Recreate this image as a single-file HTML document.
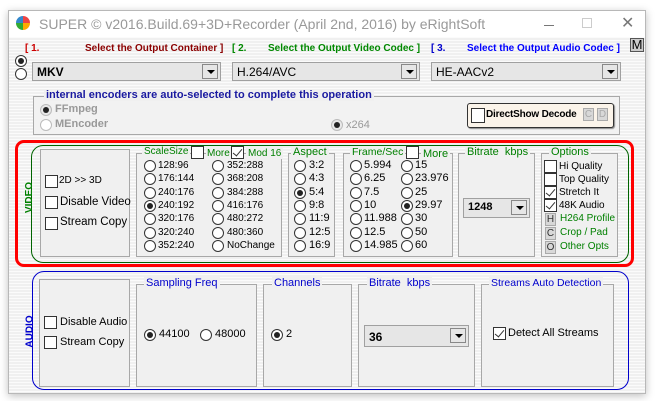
<!DOCTYPE html>
<html><head><meta charset="utf-8">
<style>
*{box-sizing:border-box;margin:0;padding:0}
body{width:656px;height:401px;background:#fff;position:relative;overflow:hidden;font-family:"Liberation Sans",sans-serif;font-size:11px;color:#000}
.a{position:absolute;white-space:nowrap}
#win{position:absolute;left:8px;top:10px;width:638px;height:384px;border:1px solid #b8b8b8;box-shadow:0 2px 8px rgba(0,0,0,.25);background:repeating-linear-gradient(#f0f0f0 0 2px,#fbfbfb 2px 3px)}
#tb{position:absolute;left:0;top:0;width:100%;height:26px;background:#fff}
.gb{position:absolute;border:1px solid #a8a8a8;background:#f0f0f0}
.lg{position:absolute;top:-8px;background:#f0f0f0;padding:0 2px;font-size:11px;white-space:nowrap}
.r{position:absolute;width:12px;height:12px;border:1px solid #333;border-radius:50%;background:#fff}
.r.on::after{content:"";position:absolute;left:2px;top:2px;width:6px;height:6px;border-radius:50%;background:#222}
.c{position:absolute;width:13px;height:13px;border:1px solid #333;background:#fff}
.c.on::after{content:"";position:absolute;left:3px;top:0px;width:4px;height:8px;border:solid #333;border-width:0 1.5px 1.5px 0;transform:rotate(40deg)}
.dd{position:absolute;height:19px;border:1px solid #a0a0a0;background:#e6e6e6;font-size:12px;padding:2px 4px;white-space:nowrap}
.dd i{position:absolute;right:2px;top:1px;width:16px;height:15px;border:1px solid #888;background:#e6e6e6}
.dd i::after{content:"";position:absolute;left:4px;top:5px;border:4px solid transparent;border-top:4px solid #000}
.t{position:absolute;white-space:nowrap;font-size:11px}
.g{color:#008000}
.sb{position:absolute;width:11px;height:13px;background:#d8d8d8;border:1px solid #aaa;font-size:10px;text-align:center;line-height:11px;color:#333}
</style></head><body>
<div id="win">
<div id="tb">
<div class="a" style="left:7px;top:5px;width:14px;height:14px;border-radius:50%;background:conic-gradient(#e44 0 25%,#fa0 0 50%,#3a3 0 75%,#38c 0)"></div>
<div class="a" style="left:30px;top:5px;font-size:14px;color:#999">SUPER © v2016.Build.69+3D+Recorder (April 2nd, 2016) by eRightSoft</div>
<div class="a" style="left:535px;top:14px;width:10px;height:1px;background:#777"></div>
<div class="a" style="left:573px;top:7px;width:10px;height:10px;border:1px solid #ccc"></div>
<div class="a" style="left:612px;top:2px;font-size:16px;color:#777">✕</div>
</div>
</div>
<div class="t" style="left:25px;top:43px;color:#c00;font-weight:bold;font-size:10px">[ 1.</div>
<div class="t" style="left:85px;top:43px;color:#8b0000;font-weight:bold;font-size:10px">Select the Output Container ]</div>
<div class="t" style="left:232px;top:43px;color:#080;font-weight:bold;font-size:10px">[ 2.</div>
<div class="t" style="left:268px;top:43px;color:#080;font-weight:bold;font-size:10px">Select the Output Video Codec ]</div>
<div class="t" style="left:431px;top:43px;color:#00c;font-weight:bold;font-size:10px">[ 3.</div>
<div class="t" style="left:467px;top:43px;color:#00f;font-weight:bold;font-size:10px">Select the Output Audio Codec ]</div>
<div class="a" style="left:630px;top:38px;width:14px;height:14px;border:1px solid #555;background:#ccc;font-size:13px;line-height:12px;text-align:center">M</div>
<div class="r on" style="left:15px;top:55px"></div>
<div class="r" style="left:15px;top:68px"></div>
<div class="dd" style="left:32px;top:62px;width:189px;font-weight:bold">MKV<i></i></div>
<div class="dd" style="left:232px;top:62px;width:188px">H.264/AVC<i></i></div>
<div class="dd" style="left:431px;top:62px;width:190px">HE-AACv2<i></i></div>
<div class="gb" style="left:33px;top:96px;width:587px;height:39px;background:#f2f2f2">
<div class="lg" style="left:10px;color:#1a1aa0;font-weight:bold;font-size:11px;top:-8px">internal encoders are auto-selected to complete this operation</div>
</div>
<div class="r on" style="left:40px;top:104px;border-color:#bbb;background:#e8e8e8"></div><div class="t" style="left:55px;top:103px;color:#999;font-weight:bold">FFmpeg</div>
<div class="r" style="left:40px;top:119px;border-color:#bbb"></div><div class="t" style="left:55px;top:118px;color:#999;font-weight:bold">MEncoder</div>
<div class="r on" style="left:331px;top:119px;border-color:#bbb;background:#e8e8e8"></div><div class="t" style="left:346px;top:119px;color:#999">x264</div>
<div class="a" style="left:467px;top:103px;width:147px;height:25px;border:1px solid #333;border-radius:3px;background:#fbf4ea;box-shadow:1px 1px 1px #888"></div>
<div class="c" style="left:471px;top:108px;width:14px;height:15px"></div>
<div class="t" style="left:486px;top:109px;font-weight:bold;font-size:10px;letter-spacing:-0.2px">DirectShow Decode</div>
<div class="sb" style="left:583px;top:108px;color:#aaa">C</div><div class="sb" style="left:597px;top:108px;color:#aaa">D</div>
<div class="a" style="left:15px;top:140px;width:619px;height:127px;border:3px solid #f00;border-radius:9px"></div>
<div class="a" style="left:31px;top:145px;width:598px;height:118px;border:1px solid #006400;border-radius:12px"></div>
<div class="a" style="left:14px;top:192px;transform:rotate(-90deg);color:#008000;font-weight:bold;font-size:10px">VIDEO</div>
<div class="gb" style="left:40px;top:149px;width:90px;height:108px"></div>
<div class="c" style="left:45px;top:175px"></div><div class="t" style="left:59px;top:175px;font-size:10px">2D &gt;&gt; 3D</div>
<div class="c" style="left:45px;top:196px"></div><div class="t" style="left:60px;top:196px;font-size:11.5px">Disable Video</div>
<div class="c" style="left:45px;top:217px"></div><div class="t" style="left:60px;top:216px;font-size:11.5px">Stream Copy</div>
<div class="gb" style="left:136px;top:153px;width:146px;height:104px">
<div class="lg g" style="left:5px;font-size:10px">ScaleSize</div></div>
<div class="c" style="left:191px;top:146px;width:13px;height:13px"></div>
<div class="t g" style="left:206px;top:148px;font-size:10px;background:#f0f0f0;padding:0 1px">More</div>
<div class="c on" style="left:231px;top:146px"></div>
<div class="t g" style="left:246px;top:148px;font-size:10px;background:#f0f0f0;padding:0 2px">Mod 16</div>
<div class="gb" style="left:288px;top:153px;width:47px;height:104px"><div class="lg g" style="left:2px;font-size:11px">Aspect</div></div>
<div class="gb" style="left:343px;top:153px;width:110px;height:104px"><div class="lg g" style="left:6px;font-size:10.5px">Frame/Sec</div></div>
<div class="c" style="left:406px;top:146px"></div><div class="t g" style="left:421px;top:148px;font-size:11px;background:#f0f0f0;padding:0 2px">More</div>
<div class="gb" style="left:458px;top:153px;width:77px;height:104px"><div class="lg g" style="left:6px;font-size:11px">Bitrate&nbsp; kbps</div></div>
<div class="dd" style="left:463px;top:198px;width:67px;font-weight:bold;font-size:11px;height:20px">1248<i></i></div>
<div class="gb" style="left:541px;top:153px;width:77px;height:104px"><div class="lg g" style="left:7px;font-size:11px">Options</div></div>
<div id="rad"></div>
<div class="c" style="left:544px;top:160px"></div><div class="t" style="left:559px;top:161px;font-size:10px">Hi Quality</div>
<div class="c" style="left:544px;top:173px"></div><div class="t" style="left:559px;top:174px;font-size:10px">Top Quality</div>
<div class="c on" style="left:544px;top:186px"></div><div class="t" style="left:559px;top:187px;font-size:10px">Stretch It</div>
<div class="c on" style="left:544px;top:199px"></div><div class="t" style="left:559px;top:200px;font-size:10px">48K Audio</div>
<div class="sb" style="left:545px;top:213px">H</div><div class="t g" style="left:560px;top:213px;font-size:10px">H264 Profile</div>
<div class="sb" style="left:545px;top:227px">C</div><div class="t g" style="left:560px;top:227px;font-size:10px">Crop / Pad</div>
<div class="sb" style="left:545px;top:241px">O</div><div class="t g" style="left:560px;top:241px;font-size:10px">Other Opts</div>
<div class="a" style="left:32px;top:271px;width:597px;height:119px;border:1px solid #00c;border-radius:12px"></div>
<div class="a" style="left:14px;top:326px;transform:rotate(-90deg);color:#00c;font-weight:bold;font-size:10px">AUDIO</div>
<div class="gb" style="left:39px;top:279px;width:91px;height:108px"></div>
<div class="c" style="left:44px;top:316px"></div><div class="t" style="left:60px;top:316px;font-size:11px">Disable Audio</div>
<div class="c" style="left:44px;top:336px"></div><div class="t" style="left:60px;top:336px;font-size:11px">Stream Copy</div>
<div class="gb" style="left:136px;top:284px;width:121px;height:103px"><div class="lg" style="left:7px;color:#00c">Sampling Freq</div></div>
<div class="r on" style="left:144px;top:329px"></div><div class="t" style="left:159px;top:328px;font-size:11px">44100</div>
<div class="r" style="left:200px;top:329px"></div><div class="t" style="left:215px;top:328px;font-size:11px">48000</div>
<div class="gb" style="left:263px;top:284px;width:89px;height:103px"><div class="lg" style="left:8px;color:#00c">Channels</div></div>
<div class="r on" style="left:271px;top:329px"></div><div class="t" style="left:286px;top:328px;font-size:11px">2</div>
<div class="gb" style="left:358px;top:284px;width:117px;height:103px"><div class="lg" style="left:8px;color:#00c">Bitrate&nbsp; kbps</div></div>
<div class="dd" style="left:364px;top:325px;width:105px;height:22px;font-weight:bold;padding-top:4px">36<i style="top:2px"></i></div>
<div class="gb" style="left:481px;top:284px;width:133px;height:103px"><div class="lg" style="left:7px;color:#00c;font-size:10.5px">Streams Auto Detection</div></div>
<div class="c on" style="left:493px;top:327px"></div><div class="t" style="left:508px;top:327px;font-size:11px">Detect All Streams</div>
<script>
var L=[["128:96","352:288"],["176:144","368:208"],["240:176","384:288"],["240:192","416:176"],["320:176","480:272"],["320:240","480:360"],["352:240","NoChange"]];
var A=["3:2","4:3","5:4","9:8","11:9","12:5","16:9"];
var F=[["5.994","15"],["6.25","23.976"],["7.5","25"],["10","29.97"],["11.988","30"],["12.5","50"],["14.985","60"]];
var h="";
for(var i=0;i<7;i++){var y=160+i*13.3;
h+='<div class="r'+(i==3?' on':'')+'" style="left:144px;top:'+y+'px"></div><div class="t" style="left:158px;top:'+(y)+'px;font-size:10px">'+L[i][0]+'</div>';
h+='<div class="r" style="left:212px;top:'+y+'px"></div><div class="t" style="left:227px;top:'+y+'px;font-size:10px">'+L[i][1]+'</div>';
h+='<div class="r'+(i==2?' on':'')+'" style="left:294px;top:'+y+'px"></div><div class="t" style="left:309px;top:'+(y-1)+'px;font-size:11px">'+A[i]+'</div>';
h+='<div class="r" style="left:350px;top:'+y+'px"></div><div class="t" style="left:364px;top:'+(y-1)+'px;font-size:11px">'+F[i][0]+'</div>';
h+='<div class="r'+(i==3?' on':'')+'" style="left:401px;top:'+y+'px"></div><div class="t" style="left:415px;top:'+(y-1)+'px;font-size:11px">'+F[i][1]+'</div>';}
document.getElementById("rad").outerHTML=h;
</script>
</body></html>
